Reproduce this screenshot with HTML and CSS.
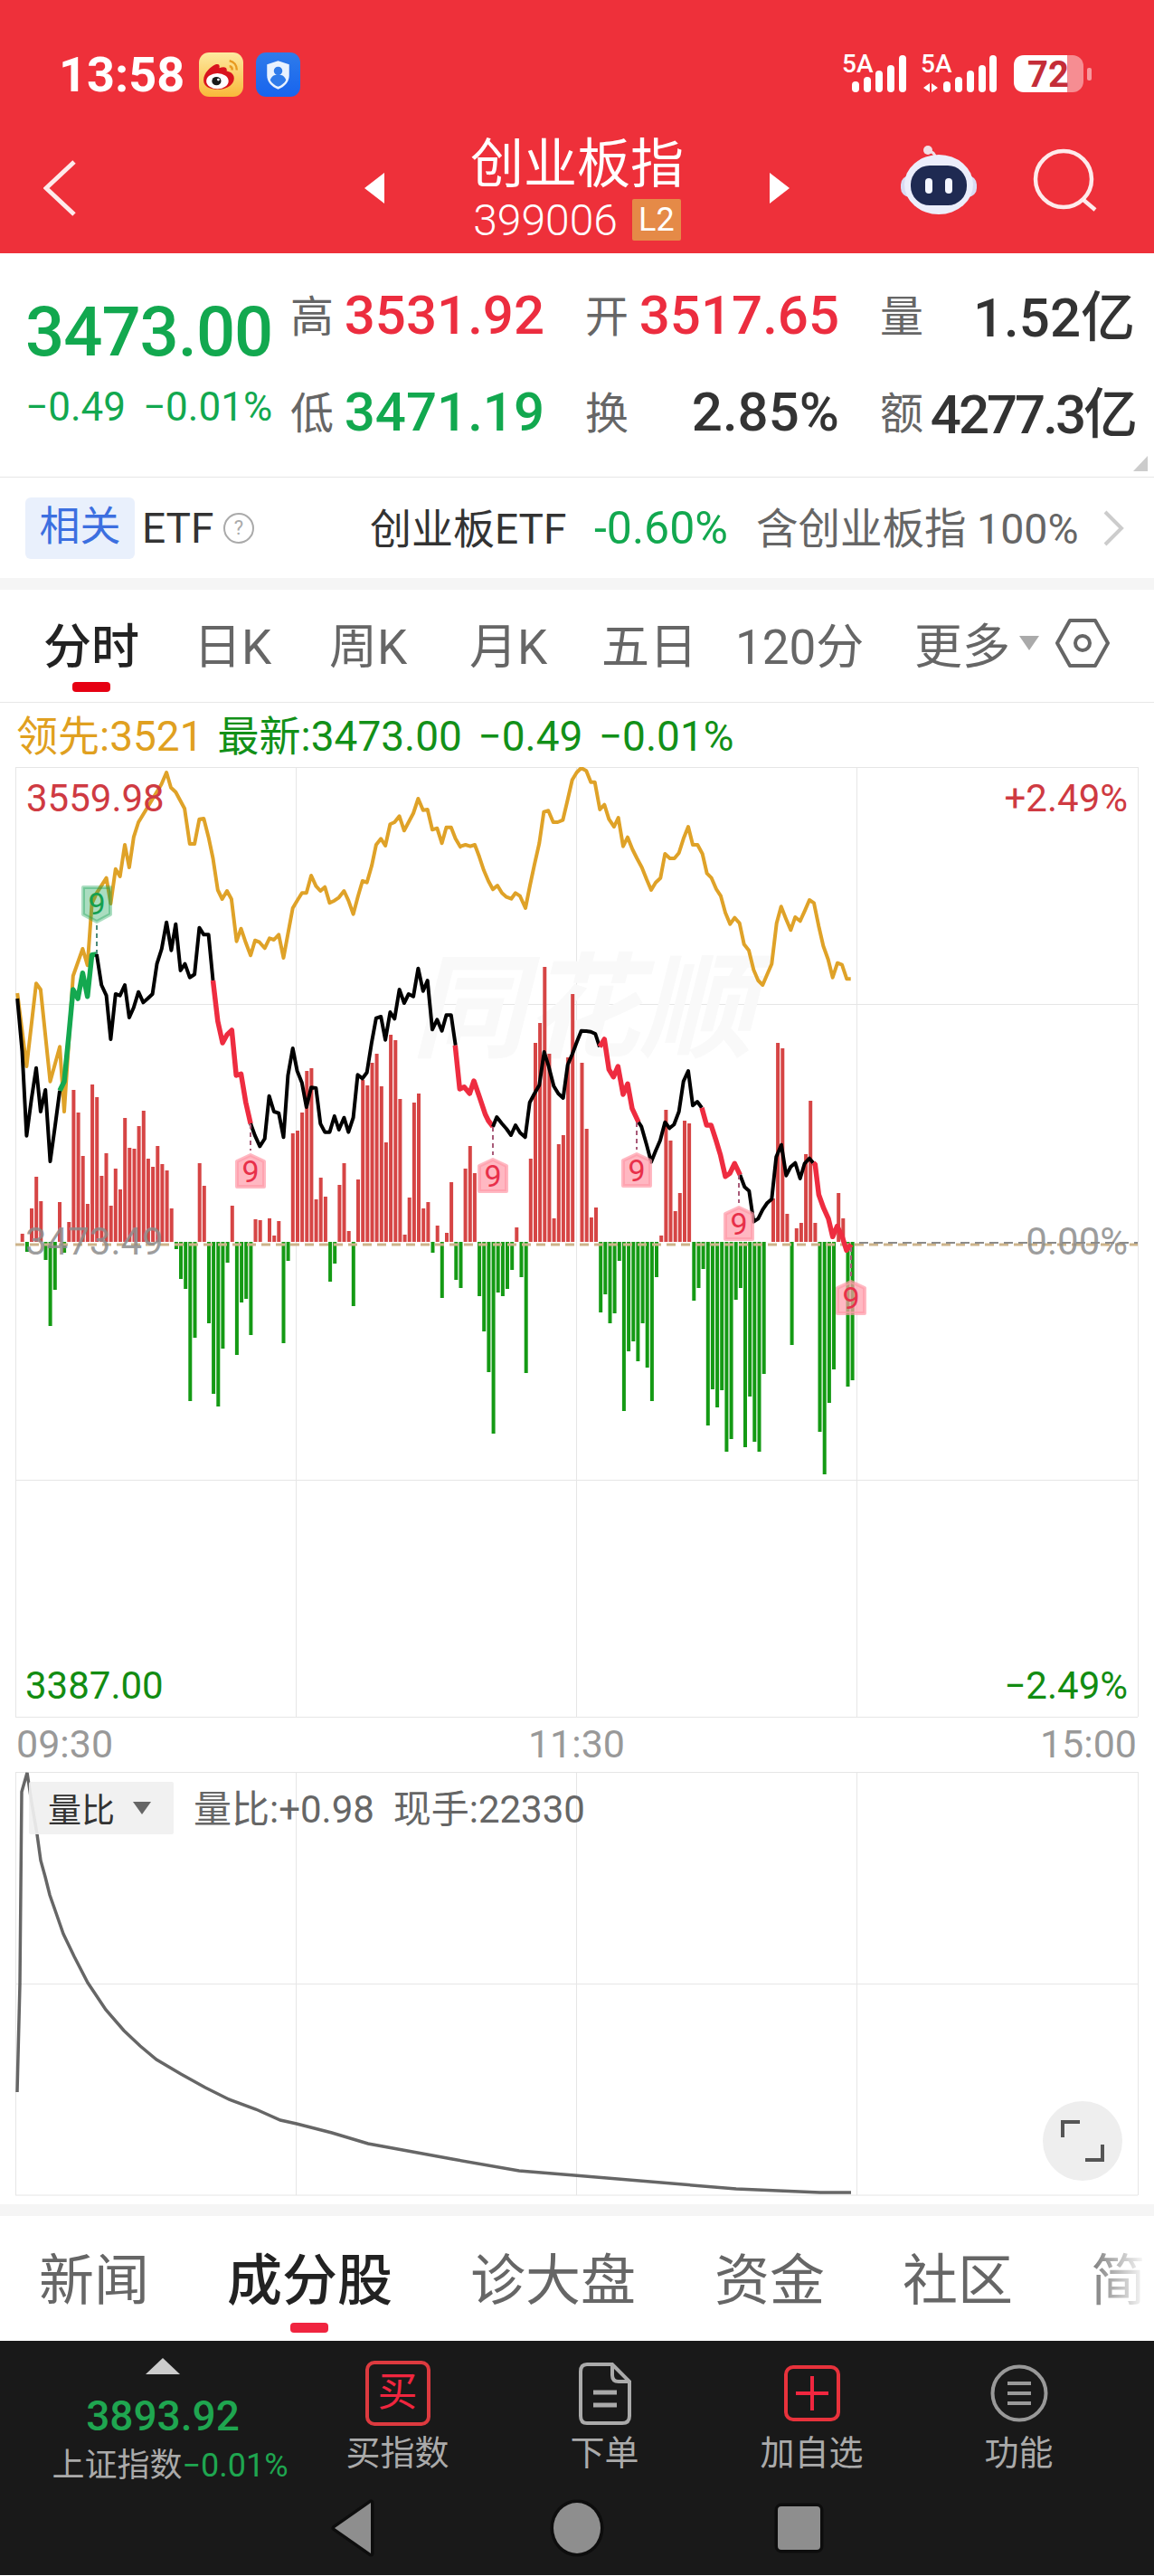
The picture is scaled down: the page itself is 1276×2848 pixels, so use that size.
FILE: index.html
```html
<!DOCTYPE html>
<html lang="zh">
<head>
  <meta charset="UTF-8">
  <title>创业板指</title>
  <link rel="stylesheet" href="styles.css">
</head>
<body>

  <!-- 顶部 -->
  <header class="top">
    <div class="status">
      <div class="status-left">
        <span class="clock">13:58</span>
        <svg class="app-icon" viewBox="0 0 48 48">
          <defs>
            <linearGradient id="wb" x1="0" y1="0" x2="0" y2="1"><stop offset="0" stop-color="#fdeaa0"/><stop offset="1" stop-color="#f9b83a"/></linearGradient>
          </defs>
          <rect width="48" height="48" rx="11" fill="url(#wb)"/>
          <path d="M5 30c0-8 8-15 13-17 3-1 5 0 4 4 5-2 9-1 8 3 5 1 8 4 8 8 0 7-8 12-17 12S5 37 5 30z" fill="#d9141e"/>
          <ellipse cx="20" cy="31" rx="12" ry="8.5" fill="#fff"/>
          <ellipse cx="19" cy="31" rx="5" ry="4.6" fill="#1a1a1a"/>
          <circle cx="21" cy="29.5" r="1.4" fill="#fff"/>
          <path d="M33 9c5 1 8 5 8 10M33 15c2 0 3 2 3 4" fill="none" stroke="#e89a20" stroke-width="2.4"/>
        </svg>
        <svg class="app-icon" viewBox="0 0 48 48">
          <defs>
            <linearGradient id="sf" x1="0" y1="0" x2="0" y2="1"><stop offset="0" stop-color="#2f7bea"/><stop offset="1" stop-color="#1764ee"/></linearGradient>
          </defs>
          <rect width="48" height="48" rx="11" fill="url(#sf)"/>
          <path d="M24 9l12 4v12c0 7-5 12-12 15-7-3-12-8-12-15V13z" fill="#e9f2ff"/>
          <circle cx="24" cy="20" r="4.6" fill="#2f7bea"/>
          <path d="M15.5 30c1-4 4-6 8.500-6s7.500 2 8.500 6c-2 3.500-5 5.500-8.500 7-3.500-1.500-6.500-3.500-8.500-7z" fill="#2f7bea"/>
        </svg>
      </div>
      <svg class="status-right" viewBox="0 -8 276 58">
        <text x="0" y="22" class="sig-text">5A</text>
        <g fill="#fff">
          <rect x="11" y="32" width="8" height="12" rx="4"/><rect x="24" y="27" width="8" height="17" rx="4"/><rect x="37" y="20" width="8" height="24" rx="4"/><rect x="50" y="14" width="8" height="30" rx="4"/><rect x="63" y="3" width="8" height="41" rx="4"/>
        </g>
        <text x="87" y="22" class="sig-text">5A</text>
        <g fill="#fff">
          <path d="M97 34v10l-7-5zM99 34v10l7-5z"/>
          <rect x="112" y="32" width="8" height="12" rx="4"/><rect x="125" y="27" width="8" height="17" rx="4"/><rect x="138" y="20" width="8" height="24" rx="4"/><rect x="151" y="14" width="8" height="30" rx="4"/><rect x="163" y="3" width="8" height="41" rx="4"/>
        </g>
        <rect x="190" y="3" width="77" height="41" rx="12" fill="#fff" fill-opacity=".45"/>
        <path d="M202 3H249V44H202Q190 44 190 32V15Q190 3 202 3Z" fill="#fff"/>
        <rect x="271" y="17" width="5" height="14" rx="2" fill="#fff" fill-opacity=".5"/>
        <text x="228" y="38" class="batt-text">72</text>
      </svg>
    </div>

    <div class="nav">
      <svg class="back" viewBox="0 0 40 64"><path d="M34 3L3 32l31 29" fill="none" stroke="#fff" stroke-width="5" stroke-opacity=".9"/></svg>
      <i class="tri-left"></i>
      <div class="nav-title">
        <div class="name">创业板指</div>
        <div class="code"><span>399006</span><b class="l2">L2</b></div>
      </div>
      <i class="tri-right"></i>
      <svg class="robot" viewBox="0 0 90 82">
        <circle cx="33" cy="6" r="5" fill="#f0dfe6"/>
        <path d="M33 7c5 0 8 3 9 9" fill="none" stroke="#f0dfe6" stroke-width="3"/>
        <rect x="3" y="34" width="84" height="24" rx="10" fill="#d9dbf2"/>
        <ellipse cx="45" cy="44" rx="38" ry="33" fill="#eceefb"/>
        <rect x="14" y="23" width="62" height="44" rx="21" fill="#1f2a52"/>
        <rect x="30" y="37" width="8" height="17" rx="4" fill="#f4f6ff"/>
        <rect x="52" y="37" width="8" height="17" rx="4" fill="#f4f6ff"/>
      </svg>
      <svg class="search" viewBox="0 0 78 78"><circle cx="36" cy="34" r="31" fill="none" stroke="#fff" stroke-width="4.500" stroke-opacity=".9"/><path d="M58 57l13 11" fill="none" stroke="#fff" stroke-width="4.500" stroke-opacity=".9"/></svg>
    </div>
  </header>

  <!-- 行情 -->
  <section class="quote">
    <div class="quote-main">
      <div class="price">3473.00</div>
      <div class="change"><span>−0.49</span><span>−0.01%</span></div>
    </div>
    <div class="quote-grid">
      <div class="cell"><span class="lb">高</span><span class="val up">3531.92</span></div>
      <div class="cell"><span class="lb">开</span><span class="val up">3517.65</span></div>
      <div class="cell"><span class="lb">量</span><span class="val cjk">1.52亿</span></div>
      <div class="cell"><span class="lb">低</span><span class="val down">3471.19</span></div>
      <div class="cell"><span class="lb">换</span><span class="val">2.85%</span></div>
      <div class="cell"><span class="lb">额</span><span class="val cjk tight">4277.3亿</span></div>
    </div>
    <i class="corner"></i>
  </section>

  <!-- ETF -->
  <section class="etf">
    <span class="etf-tag">相关</span>
    <span class="etf-label">ETF</span>
    <span class="etf-help">?</span>
    <span class="etf-name">创业板ETF</span>
    <span class="etf-pct">-0.60%</span>
    <span class="etf-hold">含创业板指 100%</span>
    <svg class="etf-arrow" viewBox="0 0 24 40"><path d="M3 2l18 18L3 38" fill="none" stroke="#ccc" stroke-width="4"/></svg>
  </section>

  <div class="band"></div>

  <!-- 周期 -->
  <nav class="periods">
    <span class="period active">分时</span>
    <span class="period">日K</span>
    <span class="period">周K</span>
    <span class="period">月K</span>
    <span class="period">五日</span>
    <span class="period">120分</span>
    <span class="period">更多</span>
    <i class="more-tri"></i>
    <svg class="hex" viewBox="0 0 60 54"><path d="M16 2h28l14 25-14 25H16L2 27z" fill="none" stroke="#666" stroke-width="4" stroke-linejoin="round"/><circle cx="30" cy="27" r="8" fill="none" stroke="#666" stroke-width="4"/></svg>
  </nav>

  <div class="legend">
    <span class="gold">领先:3521</span>
    <span class="green">最新:3473.00 −0.49 −0.01%</span>
  </div>

  <!-- 分时图 -->
  <svg id="main-chart" class="chart" viewBox="0 849 1276 1051">
    <g class="grid">
      <path d="M17 849.500H1258M17 1111.500H1258M17 1637.500H1258M17 1899.500H1258M17.500 849V1899M327.500 849V1899M637.500 849V1899M947.500 849V1899M1258.500 849V1899"/>
    </g>
    <text x="455" y="1160" class="watermark">同花顺</text>
    <path id="bars-up" class="bars-up"/>
    <path id="bars-down" class="bars-down"/>
    <path class="zero-tan" d="M17 1377H1258"/>
    <path class="zero-grey" d="M950 1375H1258"/>
    <g id="lines"></g>
    <text x="29" y="898" class="lab red">3559.98</text>
    <text x="1247" y="898" class="lab red end">+2.49%</text>
    <text x="28" y="1388" class="lab grey">3473.49</text>
    <text x="1247" y="1388" class="lab grey end">0.00%</text>
    <text x="28" y="1879" class="lab dgreen">3387.00</text>
    <text x="1247" y="1879" class="lab dgreen end">−2.49%</text>
    <g id="marks"></g>
  </svg>

  <div class="axis"><span>09:30</span><span>11:30</span><span>15:00</span></div>

  <!-- 量比 -->
  <div class="sub-chart">
    <svg id="ratio-chart" class="chart" viewBox="0 1959 1276 478">
      <g class="grid">
        <path d="M17 1959.500H1258M17 2193.500H1258M17 2427H1258M17.500 1959V2427M327.500 1959V2427M637.500 1959V2427M947.500 1959V2427M1258.500 1959V2427"/>
      </g>
      <polyline id="ratio-line" class="ratio-line"/>
    </svg>
    <div class="ratio-btn">量比<i></i></div>
    <div class="ratio-info">量比:+0.98&nbsp; 现手:22330</div>
    <div class="expand">
      <svg viewBox="0 0 48 46"><path d="M2 19V2h19M46 27v17H27" fill="none" stroke="#555" stroke-width="4"/></svg>
    </div>
  </div>

  <div class="band"></div>

  <!-- 底部标签 -->
  <nav class="tabs">
    <span class="tab">新闻</span>
    <span class="tab active">成分股</span>
    <span class="tab">诊大盘</span>
    <span class="tab">资金</span>
    <span class="tab">社区</span>
    <span class="tab">简介</span>
  </nav>

  <!-- 底栏 -->
  <footer class="foot">
    <div class="foot-row">
      <div class="index-box">
        <i class="index-tri"></i>
        <div class="index-num">3893.92</div>
        <div class="index-sub">上证指数<em>−0.01%</em></div>
      </div>
      <div class="foot-item">
        <div class="foot-icon"><span class="buy-box">买</span></div>
        <span>买指数</span>
      </div>
      <div class="foot-item">
        <div class="foot-icon">
          <svg width="58" height="69" viewBox="0 0 58 69"><path d="M9 2h28l19 19v38q0 8-8 8H9q-7 0-7-8V10q0-8 7-8zM37 2v12q0 7 7 7h12" fill="none" stroke="#aaa" stroke-width="4"/><path d="M16 33h26M16 47h26" stroke="#aaa" stroke-width="5"/></svg>
        </div>
        <span>下单</span>
      </div>
      <div class="foot-item">
        <div class="foot-icon">
          <svg width="62" height="62" viewBox="0 0 62 62"><rect x="2" y="2" width="58" height="58" rx="8" fill="none" stroke="#e8323c" stroke-width="4"/><path d="M31 12v38M13 31h36" stroke="#f0263f" stroke-width="4"/></svg>
        </div>
        <span>加自选</span>
      </div>
      <div class="foot-item">
        <div class="foot-icon">
          <svg width="64" height="64" viewBox="0 0 64 64"><circle cx="32" cy="32" r="29.500" fill="none" stroke="#999" stroke-width="4"/><path d="M19 21h26M19 32h26M19 43h26" stroke="#999" stroke-width="4"/></svg>
        </div>
        <span>功能</span>
      </div>
    </div>
    <svg class="sys-nav" viewBox="0 0 560 64">
      <g fill="#8e8e8e" stroke="#0d0d0d" stroke-width="7" paint-order="stroke" stroke-linejoin="round">
        <path d="M10 32L50 4V60Z"/>
        <ellipse cx="278" cy="32" rx="26" ry="28"/>
        <rect x="500" y="8" width="47" height="48" rx="4"/>
      </g>
    </svg>
  </footer>

  <script src="chart.js"></script>
</body>
</html>
```
FILE: styles.css
```css
* {
  box-sizing: border-box;
}

body {
  margin: 0;
  width: 1276px;
  background-color: #fff;
  color: #333;
  font-family: Roboto, "Noto Sans CJK SC", sans-serif;
  overflow-x: hidden;
}

i {
  display: block;
}

/* top */
.top {
  height: 280px;
  background-color: #ee303a;
  color: #fff;
}

.status {
  display: flex;
  justify-content: space-between;
  align-items: flex-start;
  padding: 58px 69px 0 65px;
}

.status-left {
  display: flex;
  align-items: center;
  gap: 14px;
}

.clock {
  font-size: 54px;
  font-weight: 700;
  line-height: 49px;
  margin-right: 2px;
}

.app-icon {
  width: 49px;
  height: 49px;
}

.status-right {
  width: 276px;
  height: 58px;
  margin-top: -8px;
}

.sig-text {
  fill: #fff;
  font-size: 28px;
  font-weight: 500;
}

.batt-text {
  fill: #c42d38;
  font-size: 40px;
  font-weight: 700;
  text-anchor: middle;
}

.nav {
  display: flex;
  align-items: center;
  padding: 41px 0 0 48px;
}

.back {
  width: 40px;
  height: 64px;
  margin-right: 315px;
}

.tri-left,
.tri-right {
  width: 22px;
  height: 34px;
}

.tri-left {
  background-color: #fff;
  clip-path: polygon(100% 0, 100% 100%, 0 50%);
}

.tri-right {
  background-color: #fff;
  clip-path: polygon(0 0, 0 100%, 100% 50%);
}

.nav-title {
  width: 426px;
  text-align: center;
}

.name {
  font-size: 59px;
  line-height: 66px;
}

.code {
  display: flex;
  justify-content: center;
  align-items: center;
  gap: 16px;
  height: 48px;
  margin-top: 4px;
  font-size: 48px;
  font-weight: 300;
}

.l2 {
  width: 54px;
  height: 46px;
  background-color: #e58a47;
  border-radius: 2px;
  font-size: 36px;
  font-weight: 400;
  line-height: 46px;
}

.robot {
  width: 90px;
  height: 82px;
  margin: -14px 0 0 120px;
}

.search {
  width: 78px;
  height: 78px;
  margin: -10px 0 0 57px;
}

/* quote */
.quote {
  position: relative;
  display: flex;
  height: 248px;
  border-bottom: 1px solid #e6e6e6;
}

.quote-main {
  width: 321px;
  padding: 42px 0 0 28px;
}

.price {
  color: #12a84f;
  font-size: 76px;
  font-weight: 500;
  line-height: 90px;
  letter-spacing: -1px;
}

.change {
  display: flex;
  gap: 19px;
  margin-top: 13px;
  color: #12a84f;
  font-size: 44px;
  line-height: 50px;
}

.quote-grid {
  display: grid;
  grid-template-columns: 281px 281px 282px;
  column-gap: 45px;
  row-gap: 47px;
  grid-auto-rows: 60px;
  padding-top: 40px;
}

.cell {
  display: flex;
  justify-content: space-between;
  align-items: center;
}

.lb {
  margin-top: -8px;
  color: #666;
  font-size: 48px;
}

.val {
  margin-top: -3px;
  color: #333;
  font-size: 60px;
  font-weight: 500;
  white-space: nowrap;
}

.val.cjk {
  margin-top: -10px;
}

.val.tight {
  letter-spacing: -3px;
}

.val.up {
  color: #ec2d3f;
}

.val.down {
  color: #12a84f;
}

.corner {
  position: absolute;
  right: 7px;
  bottom: 6px;
  width: 16px;
  height: 17px;
  background-color: #ccc;
  clip-path: polygon(100% 0, 100% 100%, 0 100%);
}

/* etf */
.etf {
  display: flex;
  align-items: center;
  height: 111px;
  padding-left: 28px;
  font-size: 46px;
}

.etf-tag {
  width: 121px;
  height: 68px;
  background-color: #e9f0fc;
  border-radius: 6px;
  color: #3c6fe0;
  font-size: 45px;
  line-height: 66px;
  text-align: center;
}

.etf-label {
  margin-left: 8px;
  width: 90px;
}

.etf-help {
  width: 34px;
  height: 34px;
  border: 2px solid #aaa;
  border-radius: 50%;
  color: #aaa;
  font-size: 22px;
  line-height: 30px;
  text-align: center;
}

.etf-name {
  margin: -6px 0 0 128px;
  width: 248px;
}

.etf-pct {
  width: 179px;
  color: #12a84f;
  font-size: 50px;
}

.etf-hold {
  width: 383px;
  margin-top: -6px;
  color: #666;
  font-size: 46.500px;
  white-space: nowrap;
}

.etf-arrow {
  width: 24px;
  height: 40px;
}

.band {
  height: 13px;
  background-color: #f5f5f5;
}

/* periods */
.periods {
  display: grid;
  grid-template-columns: 166px 150px 155px 146px 148px 198px 116px 40px 60px;
  align-items: center;
  height: 125px;
  padding: 0 0 6px 48px;
  border-bottom: 1px solid #e8e8e8;
  color: #666;
  font-size: 53px;
}

.period {
  position: relative;
  white-space: nowrap;
}

.period.active {
  color: #222;
  font-weight: 500;
}

.period.active::after {
  content: "";
  position: absolute;
  left: 32px;
  top: 81px;
  width: 42px;
  height: 11px;
  background-color: #e60012;
  border-radius: 4px;
}

.more-tri {
  width: 22px;
  height: 16px;
  background-color: #aaa;
  clip-path: polygon(0 0, 100% 0, 50% 100%);
}

.hex {
  width: 60px;
  height: 54px;
}

/* legend */
.legend {
  display: flex;
  align-items: center;
  gap: 16px;
  height: 71px;
  padding: 0 0 6px 18px;
  font-size: 46px;
  word-spacing: 6px;
}

.gold {
  color: #e0a020;
}

.green {
  color: #129018;
}

/* charts */
.chart {
  display: block;
  width: 1276px;
}

#main-chart {
  height: 1051px;
}

#ratio-chart {
  height: 478px;
}

.grid path {
  fill: none;
  stroke: #e6e6e6;
  stroke-width: 1;
}

.watermark {
  fill: #f9f9f9;
  font-size: 126px;
  font-weight: 700;
  font-style: italic;
}

.bars-up {
  fill: none;
  stroke: #d64545;
  stroke-width: 4;
}

.bars-down {
  fill: none;
  stroke: #149a14;
  stroke-width: 4;
}

.zero-tan {
  stroke: #cdb48a;
  stroke-width: 3;
  stroke-dasharray: 10 6;
}

.zero-grey {
  stroke: #8a8a8a;
  stroke-width: 2;
  stroke-dasharray: 10 6;
}

.line {
  fill: none;
  stroke-linejoin: round;
}

.line-gold {
  stroke: #dfa228;
  stroke-width: 4;
}

.line-black {
  stroke: #000;
  stroke-width: 4;
}

.line-red {
  stroke: #ee2c40;
  stroke-width: 5.500;
}

.line-green {
  stroke: #14a850;
  stroke-width: 5.500;
}

.lab {
  font-size: 42px;
}

.lab.end {
  text-anchor: end;
}

.lab.red {
  fill: #cf3a42;
}

.lab.grey {
  fill: #8c8c8c;
  fill-opacity: .85;
}

.lab.dgreen {
  fill: #128c12;
}

.stem {
  fill: none;
  stroke-width: 2;
  stroke-dasharray: 5 4;
}

.mark-9 {
  font-size: 34px;
  text-anchor: middle;
}

.axis {
  display: flex;
  justify-content: space-between;
  align-items: center;
  height: 60px;
  padding: 0 19px 2px 18px;
  color: #999;
  font-size: 43px;
}

.sub-chart {
  position: relative;
  height: 478px;
}

.ratio-line {
  fill: none;
  stroke: #666;
  stroke-width: 3.500;
}

.ratio-btn {
  position: absolute;
  left: 32px;
  top: 11px;
  display: flex;
  align-items: center;
  gap: 20px;
  width: 160px;
  height: 58px;
  padding-left: 21px;
  background-color: rgba(240, 240, 240, .92);
  border-radius: 2px;
  color: #333;
  font-size: 37px;
}

.ratio-btn i {
  width: 20px;
  height: 14px;
  background-color: #666;
  clip-path: polygon(0 0, 100% 0, 50% 100%);
}

.ratio-info {
  position: absolute;
  left: 214px;
  top: 12px;
  color: #666;
  font-size: 42px;
  line-height: 60px;
  white-space: nowrap;
}

.expand {
  position: absolute;
  left: 1153px;
  top: 364px;
  display: flex;
  justify-content: center;
  align-items: center;
  width: 88px;
  height: 88px;
  background-color: #eee;
  border-radius: 50%;
}

.expand svg {
  width: 48px;
  height: 46px;
}

/* bottom tabs */
.tabs {
  position: relative;
  display: grid;
  grid-template-columns: 208px 269px 270px 208px 208px 200px;
  align-items: center;
  height: 138px;
  padding: 0 0 6px 43px;
  overflow: hidden;
  color: #666;
  font-size: 61px;
}

.tabs::after {
  content: "";
  position: absolute;
  right: 0;
  top: 0;
  width: 80px;
  height: 100%;
  background: linear-gradient(to right, rgba(255, 255, 255, 0), #fff 90%);
}

.tab {
  position: relative;
  white-space: nowrap;
}

.tab.active {
  color: #222;
  font-weight: 500;
}

.tab.active::after {
  content: "";
  position: absolute;
  left: 70px;
  top: 96px;
  width: 42px;
  height: 11px;
  background-color: #f0243f;
  border-radius: 4px;
}

/* footer */
.foot {
  height: 259px;
  background-color: #191919;
  color: #aaa;
}

.foot-row {
  display: flex;
  padding-top: 18px;
}

.index-box {
  width: 360px;
  margin-right: -35px;
  text-align: center;
}

.index-tri {
  width: 38px;
  height: 18px;
  margin: 1px auto 0;
  background-color: #ccc;
  clip-path: polygon(50% 0, 100% 100%, 0 100%);
}

.index-num {
  margin-top: 19px;
  color: #1fa650;
  font-size: 46px;
  font-weight: 500;
  line-height: 54px;
}

.index-sub {
  margin: 6px 0 0 16px;
  font-size: 36px;
  line-height: 44px;
  white-space: nowrap;
}

.index-sub em {
  color: #1fa650;
  font-style: normal;
}

.foot-item {
  width: 229px;
  text-align: center;
  font-size: 38px;
  line-height: 40px;
}

.foot-icon {
  display: flex;
  justify-content: center;
  align-items: center;
  height: 80px;
  margin-bottom: 6px;
}

.buy-box {
  width: 72px;
  height: 72px;
  border: 4px solid #dd3a3f;
  border-radius: 10px;
  color: #f0263f;
  font-size: 44px;
  line-height: 62px;
}

.sys-nav {
  display: block;
  width: 560px;
  height: 64px;
  margin: 15px 0 0 360px;
}
```
FILE: chart.js
```js
// x of a one-minute slot on the time axis
function slotX(i) {
  return 19.54 + 5.157 * i;
}

const BASE_Y = 1374;

// volume per minute, positive = buy (red), negative = sell (green)
const volumes = [
  0, 9, -11, 37, 72, 45, -20, -93, -53, 44, -12, 22, 168, 143, 95, 42, 174, 160, 73, 98,
  40, 81, 58, 137, 104, 103, 128, 145, 92, 83, 106, 86, 79, 37, -8, -41, -52, -176, -106, 87,
  62, -90, -168, -182, -118, -23, 40, -125, -67, -63, -103, 25, 24, 0, 26, 7, 23, -112, -21, 120,
  123, 143, 189, 192, 47, 71, 50, -44, -24, 63, 87, 12, -71, 69, 179, 173, 198, 208, 172, 110,
  229, 223, 158, 8, 49, 154, 164, 37, 44, -12, 18, -62, 10, 66, -42, -51, 81, 106, 76, -60,
  -99, -144, -212, -56, -60, -52, -31, 16, -39, -145, 92, 220, 242, 304, 208, 26, 108, 118, 204, 274,
  0, 198, 125, 27, 38, -78, -58, -90, -79, -21, -187, -121, -110, -132, -90, -139, -176, -39, 7, 146,
  112, 34, 54, 134, 131, -65, -51, -30, -203, -163, -183, -164, -232, -218, -64, -51, -227, -171, -221, -232,
  -146, 0, 48, 220, 214, 31, -114, 15, 21, 97, 156, 21, -210, -257, -178, -141, 54, 26, -160, -153
];

let upPath = '';
let downPath = '';
volumes.forEach((v, i) => {
  if (v === 0) return;
  const seg = `M${slotX(i).toFixed(1)} ${BASE_Y}v${-v}`;
  if (v > 0) upPath += seg;
  else downPath += seg;
});
document.getElementById('bars-up').setAttribute('d', upPath);
document.getElementById('bars-down').setAttribute('d', downPath);

// the two traces were measured on different scales
const fromA = ([x, y]) => [x / 2.45, 800 + y / 3];
const fromB = ([x, y]) => [500 + x / 3, 800 + y / 3];
const fromC = ([x, y]) => [480 + x / 3, 1130 + y / 3];

const leader = [
  ...[[47,897],[72,1140],[98,865],[110,885],[136,1190],[162,1075],[174,1290],[198,840],[224,750],[237,805],[249,600],[262,565],[288,515],[300,600],[313,485],[325,510],[338,405],[350,480],[362,380],[375,330],[400,280],[437,205],[451,165],[463,215],[476,230],[500,285],[514,402],[527,402],[540,320],[552,318],[565,380],[577,450],[590,555],[602,585],[615,558],[627,585],[641,725],[653,683],[666,730],[679,772],[691,722],[703,728],[717,748],[730,715],[742,720],[755,703],[768,780],[780,700],[793,615],[805,590],[818,565],[830,565],[843,507],[856,542],[868,558],[880,545],[893,598],[906,590],[918,580],[932,558],[944,590],[957,635],[970,575],[982,525],[994,530],[1007,475],[1019,405],[1032,385],[1044,408],[1057,337],[1069,330],[1082,310],[1095,358],[1107,330],[1120,300],[1133,252],[1146,290],[1158,288],[1171,355],[1184,350],[1197,400],[1209,347],[1222,347],[1234,385],[1247,412]].map(fromA),
  ...[[28,410],[44,405],[60,410],[75,405],[90,445],[105,490],[120,525],[135,553],[150,540],[165,565],[180,578],[196,584],[210,565],[225,575],[243,615],[258,540],[273,470],[289,400],[304,296],[319,292],[335,330],[350,330],[367,323],[382,260],[398,190],[413,165],[428,150],[445,160],[460,197],[473,197],[490,288],[505,272],[520,320],[537,345],[551,315],[567,410],[582,380],[598,420],[613,450],[629,480],[645,520],[660,555],[675,530],[691,515],[706,435],[722,450],[737,450],[752,432],[767,385],[783,345],[798,405],[814,405],[830,435],[845,500],[860,515],[876,552],[891,575],[906,630],[922,668],[937,647],[953,665],[968,735],[984,755],[1000,820],[1015,855],[1030,870],[1045,835],[1060,800],[1076,665],[1091,610],[1107,650],[1123,688],[1138,645],[1154,658],[1169,625],[1185,588],[1200,598],[1216,675],[1231,740],[1247,785],[1262,845],[1278,797],[1293,803],[1309,850],[1322,850]].map(fromB)
];

// price line, split where the signal colour changes
const priceParts = [
  ['black', [[47,915],[60,1090],[72,1370],[85,1250],[98,1145],[110,1290],[123,1218],[136,1455],[149,1340],[162,1220]].map(fromA)],
  ['green', [[162,1220],[174,1190],[187,1030],[198,885],[211,915],[224,830],[237,908],[249,770],[262,768]].map(fromA)],
  ['black', [[262,768],[275,870],[288,905],[300,1050],[313,900],[325,905],[338,870],[350,978],[362,945],[375,893],[388,928],[400,915],[413,900],[425,800],[438,750],[451,662],[464,755],[476,668],[489,822],[501,800],[514,845],[527,835],[540,680],[552,703],[565,703],[577,855]].map(fromA)],
  ['red', [[577,855],[590,990],[603,1062],[615,1035],[628,1020],[640,1170],[653,1165],[666,1260],[679,1330]].map(fromA)],
  ['black', [[679,1330],[691,1370],[704,1405],[717,1380],[729,1238],[742,1290],[755,1295],[768,1375],[780,1170],[793,1080],[805,1155],[818,1195],[830,1275],[843,1210],[856,1212],[868,1330],[880,1358],[893,1358],[906,1305],[918,1350],[932,1310],[944,1358],[957,1310],[969,1168],[982,1180],[994,1160],[1007,1060],[1019,980],[1032,975],[1044,1052],[1057,960],[1069,982],[1082,885],[1095,930],[1107,900],[1120,908],[1133,815],[1146,890],[1158,855],[1171,1018],[1184,985],[1197,1022],[1209,970],[1222,970],[1234,1070]].map(fromA)],
  ['red', [[70,80],[85,225],[100,218],[118,240],[132,198],[150,250],[170,310],[180,330],[195,350]].map(fromC)],
  ['black', [[195,350],[208,318],[225,340],[240,357],[255,378],[270,345],[285,370],[302,385],[317,270],[333,240],[349,212],[365,102],[380,150],[397,215],[412,240],[428,255],[443,145],[458,110],[473,70],[488,32],[505,33],[520,35],[535,42],[549,85]].map(fromC)],
  ['red', [[549,85],[565,60],[580,160],[595,185],[610,150],[627,243],[642,208],[657,290],[678,335]].map(fromC)],
  ['black', [[678,335],[688,350],[705,410],[720,467],[735,430],[750,395],[766,335],[781,355],[796,343],[812,300],[827,200],[843,165],[858,280],[873,267],[888,287]].map(fromC)],
  ['red', [[888,287],[904,345],[919,345],[935,395],[950,445],[966,515],[981,505],[997,472],[1015,510]].map(fromC)],
  ['black', [[1015,510],[1030,550],[1045,563],[1060,665],[1075,655],[1090,625],[1105,603],[1120,590],[1135,450],[1152,410],[1168,512],[1183,483],[1198,470],[1214,522],[1229,472],[1245,455],[1258,470]].map(fromC)],
  ['red', [[1258,470],[1264,475],[1276,575],[1292,620],[1308,655],[1322,715],[1337,680],[1352,710],[1368,760],[1384,740]].map(fromC)]
];

function polyline(points, cls) {
  const str = points.map(p => p[0].toFixed(1) + ',' + p[1].toFixed(1)).join(' ');
  return `<polyline class="line line-${cls}" points="${str}"/>`;
}

let linesHtml = polyline(leader, 'gold');
for (const [cls, pts] of priceParts) {
  linesHtml += polyline(pts, cls);
}
document.getElementById('lines').innerHTML = linesHtml;

// "9" markers: centre x, top of the badge, where the stem meets the line
const marks = [
  { x: 107, top: 980, from: 1056, kind: 'green' },
  { x: 277, top: 1276, from: 1244, kind: 'red' },
  { x: 545, top: 1281, from: 1247, kind: 'red' },
  { x: 704, top: 1275, from: 1242, kind: 'red' },
  { x: 817, top: 1334, from: 1300, kind: 'red' },
  { x: 941, top: 1416, from: 1380, kind: 'red' }
];

let marksHtml = '';
for (const m of marks) {
  const isGreen = m.kind === 'green';
  const fill = isGreen ? '#14a050' : '#ff9aa8';
  const ink = isGreen ? '#14a050' : '#e8304a';
  const stemColor = isGreen ? '#4a8a78' : '#a85a78';
  const opacity = isGreen ? 0.36 : 0.7;
  // green badge points down to the line below it, red ones point up
  const shape = isGreen
    ? `M${m.x - 15} ${m.top + 2}h30v30l-15 8l-15 -8z`
    : `M${m.x} ${m.top + 2}l15 7v28h-30v-28z`;
  const stemEnd = isGreen ? m.top + 42 : m.top - 3;
  marksHtml += `<path class="stem" stroke="${stemColor}" d="M${m.x} ${m.from}V${stemEnd}"/>`;
  marksHtml += `<path d="${shape}" fill="${fill}" fill-opacity="${opacity}" stroke="${fill}" stroke-opacity="${opacity}" stroke-width="4" stroke-linejoin="round" paint-order="stroke"/>`;
  marksHtml += `<text class="mark-9" x="${m.x}" y="${m.top + 32}" fill="${ink}">9</text>`;
}
document.getElementById('marks').innerHTML = marksHtml;

// volume ratio curve
const ratio = [
  [19,2313],[22,2193],[24,1981],[30,1960],[35,1993],[41,2028],[45,2057],[50,2075],[55,2095],[62,2115],[70,2138],[82,2163],[97,2192],[117,2222],[137,2245],[155,2262],[173,2277],[200,2293],[227,2308],[253,2321],[283,2332],[310,2344],[328,2348],[367,2358],[407,2370],[500,2387],[574,2400],[635,2405],[814,2420],[907,2424],[941,2424]
];
document.getElementById('ratio-line').setAttribute('points', ratio.map(p => p.join(',')).join(' '));
```
